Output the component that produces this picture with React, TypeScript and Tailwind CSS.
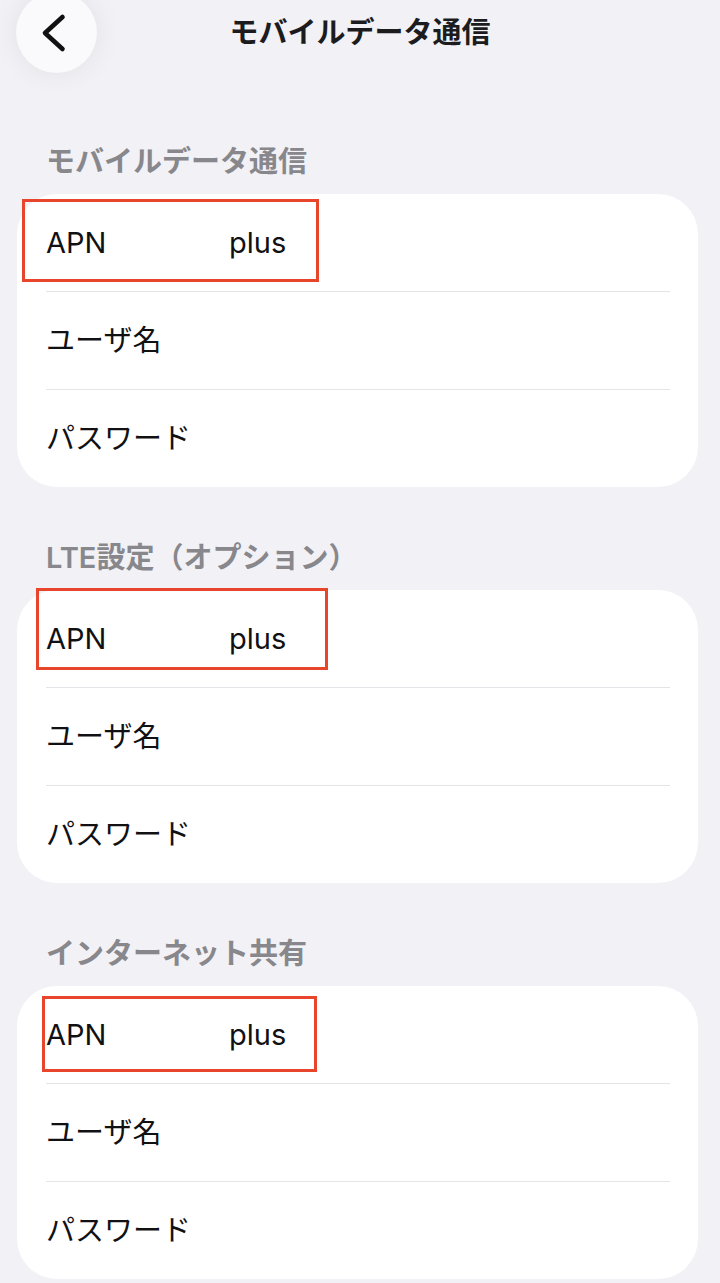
import React from "react";

const FONT = '"Inter", "Noto Sans CJK JP", sans-serif';

type RedBox = { left: number; top: number; width: number; height: number };

function Section({ title, box }: { title: string; box: RedBox }) {
  return (
    <section>
      <div className="ml-[46px] h-[34px] leading-[34px] text-[29px] font-semibold text-[#87878c] whitespace-nowrap">
        {title}
      </div>
      <div className="relative mt-[15px] ml-[17px] mr-[22px] rounded-[40px] bg-white">
        <div className="h-[97px] flex items-center pl-[29px] text-[29px] text-[#111113]">
          <span className="w-[183px]">APN</span>
          <span>plus</span>
        </div>
        <div className="ml-[29px] mr-[28px] h-px bg-[#e4e4e8]" />
        <div className="h-[97px] flex items-center pl-[29px] text-[29px] text-[#111113]">ユーザ名</div>
        <div className="ml-[29px] mr-[28px] h-px bg-[#e4e4e8]" />
        <div className="h-[97px] flex items-center pl-[29px] text-[29px] text-[#111113]">パスワード</div>
        <div
          className="absolute border-[3px] border-[#e8452d] pointer-events-none"
          style={{ left: box.left, top: box.top, width: box.width, height: box.height }}
        />
      </div>
    </section>
  );
}

export default function App() {
  return (
    <div className="min-h-screen w-[720px] bg-[#f1f1f6] overflow-hidden" style={{ fontFamily: FONT }}>
      <header className="grid grid-cols-[1fr_auto_1fr] grid-rows-[73px] h-[73px]">
        <div className="self-start">
          <div className="-mt-[8px] ml-4 w-[81px] h-[81px] rounded-full bg-[#fafafc] shadow-[0_0_28px_rgba(0,0,0,0.07)] flex items-center justify-center">
            <svg width="81" height="81" viewBox="0 0 81 81" fill="none">
              <polyline
                points="46.5,25 29,41 46.5,57"
                stroke="#111"
                strokeWidth="4.6"
                strokeLinecap="round"
                strokeLinejoin="round"
              />
            </svg>
          </div>
        </div>
        <h1 className="self-start mt-[18px] text-[29px] leading-[29px] font-bold text-[#1c1c1e] whitespace-nowrap">
          モバイルデータ通信
        </h1>
        <div />
      </header>

      <div className="mt-[72px]">
        <Section title="モバイルデータ通信" box={{ left: 5, top: 5, width: 297, height: 83 }} />
      </div>
      <div className="mt-[54px]">
        <Section title="LTE設定（オプション）" box={{ left: 19, top: -2, width: 292, height: 82 }} />
      </div>
      <div className="mt-[54px]">
        <Section title="インターネット共有" box={{ left: 25, top: 10, width: 275, height: 76 }} />
      </div>
    </div>
  );
}
